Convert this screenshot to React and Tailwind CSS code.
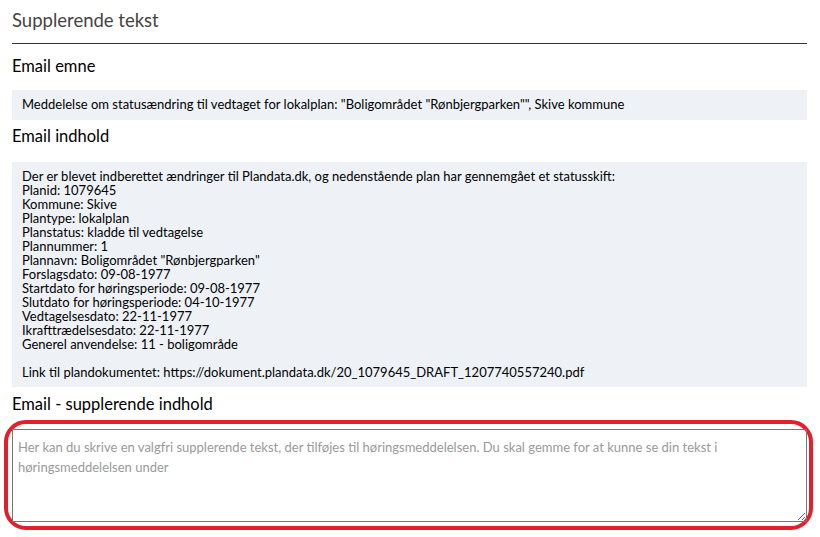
import React from "react";

function App() {
  const planLines = [
    "Der er blevet indberettet ændringer til Plandata.dk, og nedenstående plan har gennemgået et statusskift:",
    "Planid: 1079645",
    "Kommune: Skive",
    "Plantype: lokalplan",
    "Planstatus: kladde til vedtagelse",
    "Plannummer: 1",
    'Plannavn: Boligområdet "Rønbjergparken"',
    "Forslagsdato: 09-08-1977",
    "Startdato for høringsperiode: 09-08-1977",
    "Slutdato for høringsperiode: 04-10-1977",
    "Vedtagelsesdato: 22-11-1977",
    "Ikrafttrædelsesdato: 22-11-1977",
    "Generel anvendelse: 11 - boligområde",
    "",
    "Link til plandokumentet: https://dokument.plandata.dk/20_1079645_DRAFT_1207740557240.pdf",
  ];

  return (
    <main className="w-[820px] h-[537px] overflow-hidden bg-white pl-3 pr-[13px] font-['Lato','Open_Sans',sans-serif] text-black">
      <h2 className="text-[18.5px] leading-[22px] pt-[9px] pb-[12px] text-[#444] border-b border-[#333]">
        Supplerende tekst
      </h2>

      <h3 className="mt-[12px] text-[16.5px] leading-[20px]">Email emne</h3>
      <div className="mt-[14px] h-[30px] px-[10px] flex items-center bg-[#eef2f7] text-[13px]">
        Meddelelse om statusændring til vedtaget for lokalplan: "Boligområdet "Rønbjergparken"", Skive kommune
      </div>

      <h3 className="mt-[6px] text-[16.5px] leading-[20px]">Email indhold</h3>
      <div className="mt-[16px] pt-[7px] pb-[8px] px-[10px] bg-[#eef2f7] text-[13px] leading-[14px]">
        {planLines.map((line, i) => (
          <div key={i} className="h-[14px] whitespace-nowrap">
            {line}
          </div>
        ))}
      </div>

      <h3 className="mt-[7px] text-[16.5px] leading-[20px]">Email - supplerende indhold</h3>
      <div className="mt-[6px] -ml-2 -mr-[6px] border-4 border-[#e3202a] rounded-[22px] pt-[5px] pb-[4px] pl-[4px] pr-[2px]">
        <textarea
          className="block w-full h-[93px] border border-[#767676] pl-[5px] pr-2 pt-[7px] text-[13px] leading-[20px] placeholder:text-[#9a9a9a] outline-none"
          placeholder="Her kan du skrive en valgfri supplerende tekst, der tilføjes til høringsmeddelelsen. Du skal gemme for at kunne se din tekst i høringsmeddelelsen under"
        />
      </div>
    </main>
  );
}

export default App;
